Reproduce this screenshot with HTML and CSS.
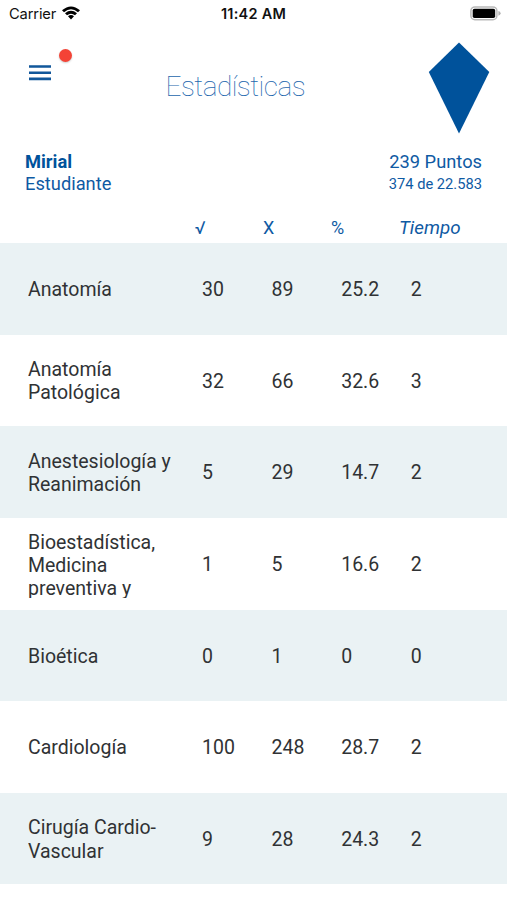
FILE: index.html
```html
<!DOCTYPE html>
<html lang="es">
<head>
<meta charset="utf-8">
<title>Estadísticas</title>
<link rel="stylesheet" href="styles.css">
</head>
<body>
<div class="status">
  <div class="carrier"><span>Carrier</span>
    <svg class="wifi" width="18" height="14" viewBox="0 0 18 14"><path d="M0 4.3Q9-3.5 18 4.3L16 6.3Q9 .4 2 6.3ZM3 7.3Q9 2.4 15 7.3L13 9.3Q9 6.2 5 9.3ZM6 10.3Q9 7.9 12 10.3L9 13.6Z"/></svg>
  </div>
  <div class="clock">11:42 AM</div>
  <svg class="battery" width="31" height="15" viewBox="0 0 31 15"><rect x=".9" y=".9" width="26" height="12.8" rx="4" fill="#fff" stroke="#b9b9b9" stroke-width="1.5"/><rect x="2.7" y="2.7" width="22.5" height="9.3" rx="1.8"/><path d="M28.4 5Q30.6 5.5 30.6 7.3T28.4 9.7Z" fill="#b0b0b0"/></svg>
</div>
<header class="header">
  <div class="menu">
    <svg width="22" height="16" viewBox="0 0 22 16"><path d="M0 1.5H22M0 7.7H22M0 13.9H22"/></svg>
    <span class="dot"></span>
  </div>
  <h1>Estadísticas</h1>
  <svg class="kite" width="62" height="92" viewBox="0 0 62 92"><path d="M31 .5 61.3 30 31 91.5.8 30Z"/></svg>
</header>
<section class="profile">
  <div><div class="name">Mirial</div><div>Estudiante</div></div>
  <div class="score"><div>239 Puntos</div><div class="rank">374 de 22.583</div></div>
</section>
<div class="columns"><span>√</span><span>X</span><span>%</span><em>Tiempo</em></div>
<main>
  <div class="row"><div class="subject">Anatomía</div><span>30</span><span>89</span><span>25.2</span><span>2</span></div>
  <div class="row"><div class="subject">Anatomía Patológica</div><span>32</span><span>66</span><span>32.6</span><span>3</span></div>
  <div class="row"><div class="subject">Anestesiología y Reanimación</div><span>5</span><span>29</span><span>14.7</span><span>2</span></div>
  <div class="row"><div class="subject">Bioestadística, Medicina preventiva y</div><span>1</span><span>5</span><span>16.6</span><span>2</span></div>
  <div class="row"><div class="subject">Bioética</div><span>0</span><span>1</span><span>0</span><span>0</span></div>
  <div class="row"><div class="subject">Cardiología</div><span>100</span><span>248</span><span>28.7</span><span>2</span></div>
  <div class="row"><div class="subject">Cirugía Cardio-Vascular</div><span>9</span><span>28</span><span>24.3</span><span>2</span></div>
</main>
</body>
</html>
```
FILE: styles.css
```css
* { box-sizing: border-box; }
body { margin: 0; height: 900px; overflow: hidden; background: #fff; color: #303234; font-family: Roboto, sans-serif; }
.status { height: 28px; padding: 0 6px 0 9px; display: grid; grid-template-columns: 1fr auto 1fr; align-items: center; color: #111; font: 14.7px/28px Inter, sans-serif; }
.carrier { display: flex; align-items: center; gap: 6px; letter-spacing: -.15px; }
.wifi { margin-top: -2px; }
.clock { margin-right: 3px; font-size: 14.5px; font-weight: 600; letter-spacing: .25px; }
.battery { justify-self: end; margin-top: -2px; }
.header { height: 123px; display: grid; grid-template-columns: 165.5px 1fr 62px; padding-right: 17px; color: #00529b; }
.menu { position: relative; padding: 37px 0 0 29px; }
.menu svg { display: block; stroke: #11579b; stroke-width: 2.6; }
.dot { position: absolute; left: 59px; top: 21px; width: 13px; height: 13px; border-radius: 50%; background: #f44336; box-shadow: 0 1px 2px #0003; }
h1 { margin: 42px 0 0; font-size: 28px; line-height: 34px; font-weight: 100; letter-spacing: -.52px; color: #1c66ad; }
.kite { margin-top: 14px; fill: #00529b; }
.profile { height: 65px; padding: 0 25px; display: flex; justify-content: space-between; color: #0f5aa3; font-size: 18.3px; line-height: 22px; }
.name { font-weight: 700; color: #00529b; }
.score { text-align: right; }
.rank { font-size: 14.7px; }
.columns { height: 27px; padding-left: 195px; display: grid; grid-template-columns: repeat(3, 68px) 1fr; font-size: 18px; line-height: 24px; color: #0f5aa3; }
.columns em { font-size: 18.8px; }
.row { height: 91.64px; padding: 2px 0 0 28px; display: grid; grid-template-columns: 174px repeat(3, 69.6px) 1fr; align-items: center; font-size: 19.5px; line-height: 23.2px; }
.row:nth-child(odd) { background: #eaf2f4; }
.subject { width: 150px; max-height: 67.5px; overflow: hidden; }
```
